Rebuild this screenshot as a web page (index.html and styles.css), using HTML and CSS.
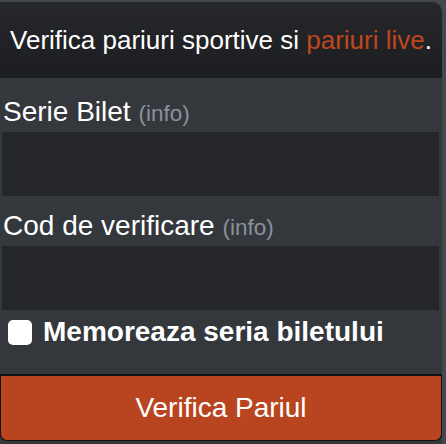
FILE: index.html
```html
<!DOCTYPE html>
<html lang="ro">
<head>
    <meta charset="UTF-8">
    <meta name="viewport" content="width=device-width, initial-scale=1.0">
    <title>Verifica Biletul</title>
    <link rel="stylesheet" href="styles.css">
</head>
<body>
    <div class="panel">
        <div class="panel-header">
            <p>Verifica pariuri sportive si <a href="#" class="accent">pariuri live</a>.</p>
        </div>
        <form class="ticket-form" onsubmit="event.preventDefault()">
            <label for="serie">Serie Bilet <span class="info">(info)</span></label>
            <input type="text" id="serie" name="serie">

            <label for="cod">Cod de verificare <span class="info">(info)</span></label>
            <input type="text" id="cod" name="cod">

            <div class="remember">
                <span class="check"></span>
                <span class="remember-text">Memoreaza seria biletului</span>
            </div>

            <button type="submit" class="btn-check">Verifica Pariul</button>
        </form>
    </div>
</body>
</html>
```

FILE: styles.css
```css
body {
    margin: 0;
    background-color: #44474c;
    font-family: "Liberation Sans", Arial, sans-serif;
    color: #fff;
}
.panel {
    width: 442px;
    margin-top: 2px;
    background-color: #34373c;
    border-top-right-radius: 10px;
    padding-bottom: 3px;
}
.panel-header {
    height: 76px;
    display: flex;
    align-items: center;
    justify-content: center;
    background: linear-gradient(#27282c, #1c1d20);
    border-top-right-radius: 10px;
}
.panel-header p {
    margin: 0;
    font-size: 26px;
    line-height: 1;
}
.accent {
    color: #c0461f;
    text-decoration: none;
}
.ticket-form {
    display: flex;
    flex-direction: column;
}
label {
    display: block;
    margin: 20px 0 0 3px;
    font-size: 28px;
    line-height: 1;
}
label + input {
    margin-top: 6px;
}
input + label {
    margin-top: 16px;
}
.info {
    font-size: 22.5px;
    color: #8a9199;
}
input[type="text"] {
    margin-left: 2px;
    width: 437px;
    height: 64px;
    box-sizing: border-box;
    border: none;
    background-color: #25262a;
    color: #fff;
    font-size: 22px;
    padding: 0 10px;
}
.remember {
    display: flex;
    align-items: center;
    gap: 11px;
    margin: 8px 0 0 8px;
}
.check {
    width: 24px;
    height: 25px;
    background: #fff;
    border-radius: 5px;
}
.remember-text {
    font-size: 28px;
    font-weight: bold;
    line-height: 1;
}
.btn-check {
    margin-top: 28px;
    height: 67px;
    width: 442px;
    background-color: #b94520;
    border: 1px solid #111;
    border-top-width: 2px;
    border-radius: 0 0 7px 7px;
    color: #fff;
    font-family: inherit;
    font-size: 28px;
    line-height: 1;
    cursor: pointer;
}
```
